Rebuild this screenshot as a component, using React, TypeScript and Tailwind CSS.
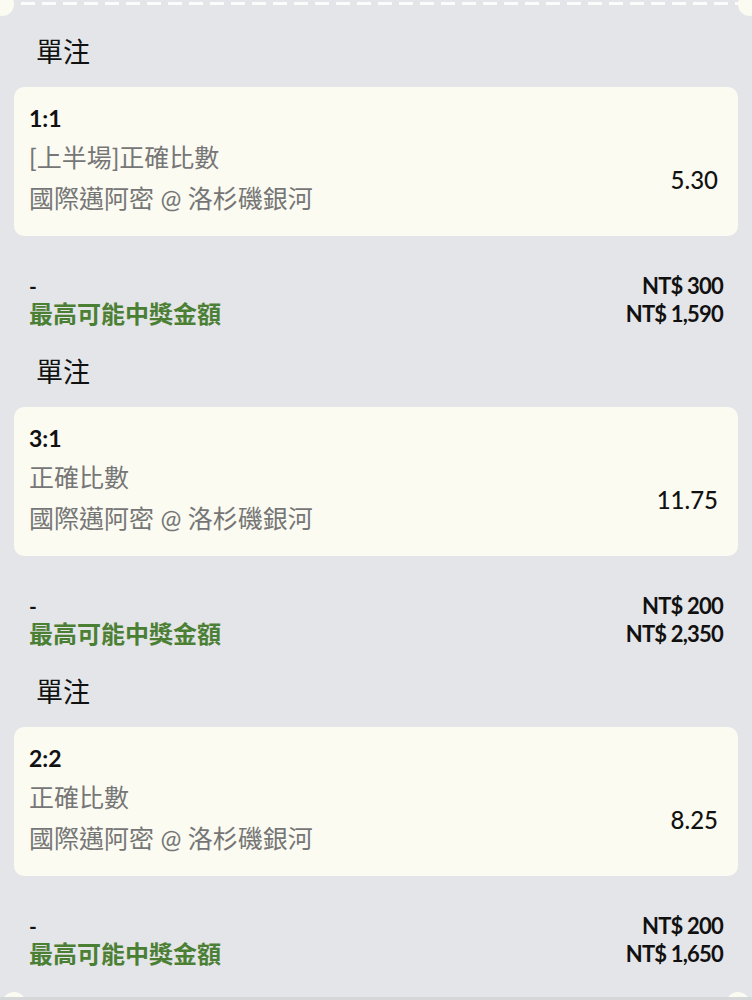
import React from "react"

const bets = [
    { score: "1:1", market: "[上半場]正確比數", match: "國際邁阿密 @ 洛杉磯銀河", odds: "5.30", stake: "NT$ 300", payout: "NT$ 1,590" },
    { score: "3:1", market: "正確比數", match: "國際邁阿密 @ 洛杉磯銀河", odds: "11.75", stake: "NT$ 200", payout: "NT$ 2,350" },
    { score: "2:2", market: "正確比數", match: "國際邁阿密 @ 洛杉磯銀河", odds: "8.25", stake: "NT$ 200", payout: "NT$ 1,650" },
]

export default function App() {
    return (
        <div
            className="relative h-[1000px] w-full overflow-hidden bg-[#e4e5e8] border-b-[3px] border-[#d6d7d9]"
            style={{ fontFamily: "Lato, 'Noto Sans CJK TC', 'Noto Sans', sans-serif" }}
        >
            {/* ticket edge */}
            <div className="absolute left-0 right-0 top-[2px] h-[3px] bg-[repeating-linear-gradient(90deg,#ffffff_0_14px,transparent_14px_21px)] opacity-90" />
            <div className="absolute -left-[10px] -top-[8px] h-[24px] w-[24px] rounded-full bg-[#fbfbf2]" />
            <div className="absolute -right-[10px] -top-[8px] h-[24px] w-[24px] rounded-full bg-[#fbfbf2]" />
            <div className="absolute left-[2px] top-[992px] h-[24px] w-[24px] rounded-full bg-[#fbfbf2]" />
            <div className="absolute right-[2px] top-[992px] h-[24px] w-[24px] rounded-full bg-[#fbfbf2]" />

            <div className="flex flex-col pt-[34px]">
                {bets.map((bet, i) => (
                    <section key={i} className={i > 0 ? "mt-[26px]" : ""}>
                        <h2 className="pl-[36px] text-[27px] leading-[36px] font-normal text-[#111]">單注</h2>
                        <div className="mx-[14px] mt-[17px] rounded-[10px] bg-[#fbfbf2] pl-[15px] pr-[20px] pt-[16px] pb-[20px]">
                            <div className="text-[23px] leading-[30px] font-bold text-[#111]">{bet.score}</div>
                            <div className="mt-[6px] flex items-center justify-between">
                                <div className="flex flex-col gap-[5px] text-[25px] leading-[36px] font-normal text-[#767676]">
                                    <span>{bet.market}</span>
                                    <span>{bet.match}</span>
                                </div>
                                <span className="pt-[4px] text-[24px] font-medium text-[#111]">{bet.odds}</span>
                            </div>
                        </div>
                        <div className="mt-[36px] flex items-start justify-between pl-[29px] pr-[29px]">
                            <div className="flex flex-col">
                                <span className="text-[21px] leading-[28px] font-bold text-[#111]">-</span>
                                <span className="text-[24px] leading-[28px] font-bold text-[#4b8034]">最高可能中獎金額</span>
                            </div>
                            <div className="flex flex-col items-end text-[22px] leading-[28px] font-bold text-[#111] tracking-[-0.8px]">
                                <span>{bet.stake}</span>
                                <span>{bet.payout}</span>
                            </div>
                        </div>
                    </section>
                ))}
            </div>
        </div>
    )
}
